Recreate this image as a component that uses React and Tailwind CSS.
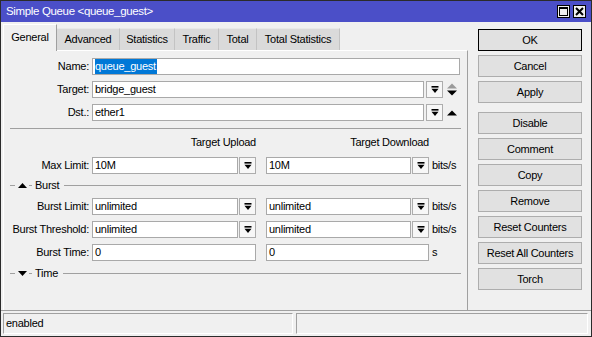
import React from "react";

const DdIcon = () => (
  <svg width="8" height="8" viewBox="0 0 8 8">
    <rect x="0.5" y="0" width="7" height="1.6" fill="#000" />
    <polygon points="0.5,2.8 7.5,2.8 4,7" fill="#000" />
  </svg>
);

const DdBtn = () => (
  <div className="w-[17px] h-[17px] shrink-0 border border-[#adadad] bg-[#f7f7f7] flex items-center justify-center">
    <DdIcon />
  </div>
);

const Input = ({ w, children }) => (
  <div
    className={`${w} h-[17px] shrink-0 bg-white border border-[#a9a9a9] flex items-center pl-[2px] leading-none overflow-hidden whitespace-nowrap`}
  >
    {children}
  </div>
);

const Label = ({ children }) => (
  <div className="w-[85px] shrink-0 text-right pr-0 mr-[3px] whitespace-nowrap">{children}</div>
);

const Row = ({ children, className = "" }) => (
  <div className={`flex items-center h-[17px] ${className}`}>{children}</div>
);

const TriUp = ({ color = "#000" }) => (
  <svg width="10" height="6" viewBox="0 0 10 6">
    <polygon points="0,5.5 10,5.5 5,0.5" fill={color} />
  </svg>
);
const TriDown = ({ color = "#000" }) => (
  <svg width="10" height="6" viewBox="0 0 10 6">
    <polygon points="0,0.5 10,0.5 5,5.5" fill={color} />
  </svg>
);

const SectionSep = ({ up, label }) => (
  <div className="flex items-center h-[22px] ml-[6px] mr-[6px]">
    <div className="w-[5px] border-t border-[#a0a0a0]" />
    <div className="ml-[3px] w-[9px] flex items-center justify-center">
      {up ? (
        <svg width="9" height="5" viewBox="0 0 9 5"><polygon points="0,5 9,5 4.5,0" fill="#000" /></svg>
      ) : (
        <svg width="9" height="5" viewBox="0 0 9 5"><polygon points="0,0 9,0 4.5,5" fill="#000" /></svg>
      )}
    </div>
    <div className="ml-[2px] w-[3px] border-t border-[#a0a0a0]" />
    <div className="ml-[3px] leading-none">{label}</div>
    <div className="ml-[5px] flex-1 border-t border-[#a0a0a0]" />
  </div>
);

const Btn = ({ children, focused }) => (
  <div
    className={`w-[104px] h-[22px] flex items-center justify-center bg-[#e1e1e1] border ${
      focused ? "border-black" : "border-[#adadad]"
    }`}
  >
    {children}
  </div>
);

export default function App() {
  const tabs = ["Advanced", "Statistics", "Traffic", "Total", "Total Statistics"];
  const tabW = ["w-[63px]", "w-[55px]", "w-[44px]", "w-[38px]", "w-[83px]"];
  return (
    <div className="w-[592px] h-[337px] bg-[#f0f0f0] border border-[#2b2b2b] flex flex-col font-['Liberation_Sans',Arial,sans-serif] text-[11px] tracking-[-0.25px] text-black overflow-hidden">
      {/* Title bar */}
      <div className="h-[21px] shrink-0 bg-[#4b4fc8] flex items-center justify-between pl-[5px] pr-[5px]">
        <div className="text-white text-[11.5px] tracking-[-0.35px] leading-none">Simple Queue &lt;queue_guest&gt;</div>
        <div className="flex items-center gap-[3px]">
          <div className="w-[13px] h-[13px] bg-[#f0f0f0] border border-black flex items-center justify-center">
            <svg width="9" height="9" viewBox="0 0 9 9">
              <rect x="0.5" y="0.5" width="8" height="8" fill="none" stroke="#000" strokeWidth="1" />
              <rect x="0" y="0" width="9" height="2" fill="#000" />
            </svg>
          </div>
          <div className="w-[13px] h-[13px] bg-[#f0f0f0] border border-black flex items-center justify-center">
            <svg width="9" height="9" viewBox="0 0 9 9">
              <path d="M1 1 L8 8 M8 1 L1 8" stroke="#000" strokeWidth="2" />
            </svg>
          </div>
        </div>
      </div>

      {/* Main */}
      <div className="flex h-[288px] shrink-0">
        {/* Left column */}
        <div className="ml-[2px] w-[465px] flex flex-col">
          {/* Tabs */}
          <div className="h-[28px] flex items-end relative">
            <div className="w-[54px] h-[27px] bg-[#f0f0f0] border-l border-t border-r border-white border-r-[#a0a0a0] flex items-center justify-center pb-[2px] relative z-10 -mb-[1px]">
              General
            </div>
            {tabs.map((t, i) => (
              <div
                key={t}
                className={`${tabW[i]} h-[22px] bg-[#dadada] border-t border-r border-[#c3c3c3] border-t-[#e8e8e8] flex items-center justify-center`}
              >
                {t}
              </div>
            ))}
          </div>
          {/* Panel */}
          <div className="flex-1 border-l border-t border-white border-r border-r-[#a0a0a0] flex flex-col pt-[7px]">
            <Row>
              <Label>Name:</Label>
              <Input w="w-[368px]">
                <span className="bg-[#0078d7] text-white h-[15px] flex items-center pr-[1px]">queue_guest</span>
              </Input>
            </Row>
            <Row className="mt-[6px]">
              <Label>Target:</Label>
              <Input w="w-[332px]">bridge_guest</Input>
              <div className="ml-[2px]"><DdBtn /></div>
              <div className="ml-[4px] flex flex-col gap-[1px]">
                <TriUp color="#9a9a9a" />
                <TriDown />
              </div>
            </Row>
            <Row className="mt-[6px]">
              <Label>Dst.:</Label>
              <Input w="w-[332px]">ether1</Input>
              <div className="ml-[2px]"><DdBtn /></div>
              <div className="ml-[4px] flex flex-col">
                <TriUp />
              </div>
            </Row>
            <div className="mt-[7px] ml-[6px] mr-[6px] border-t border-[#a0a0a0]" />
            <div className="mt-[5px] h-[17px] flex items-center">
              <div className="w-[88px] shrink-0" />
              <div className="w-[164px] text-right">Target Upload</div>
              <div className="w-[10px]" />
              <div className="w-[163px] text-right">Target Download</div>
            </div>
            <Row className="mt-[6px]">
              <Label>Max Limit:</Label>
              <Input w="w-[146px]">10M</Input>
              <div className="ml-[1px]"><DdBtn /></div>
              <div className="ml-[10px]"><Input w="w-[145px]">10M</Input></div>
              <div className="ml-[1px]"><DdBtn /></div>
              <div className="ml-[3px]">bits/s</div>
            </Row>
            <SectionSep up label="Burst" />
            <Row className="mt-[2px]">
              <Label>Burst Limit:</Label>
              <Input w="w-[146px]">unlimited</Input>
              <div className="ml-[1px]"><DdBtn /></div>
              <div className="ml-[10px]"><Input w="w-[145px]">unlimited</Input></div>
              <div className="ml-[1px]"><DdBtn /></div>
              <div className="ml-[3px]">bits/s</div>
            </Row>
            <Row className="mt-[6px]">
              <Label>Burst Threshold:</Label>
              <Input w="w-[146px]">unlimited</Input>
              <div className="ml-[1px]"><DdBtn /></div>
              <div className="ml-[10px]"><Input w="w-[145px]">unlimited</Input></div>
              <div className="ml-[1px]"><DdBtn /></div>
              <div className="ml-[3px]">bits/s</div>
            </Row>
            <Row className="mt-[6px]">
              <Label>Burst Time:</Label>
              <Input w="w-[164px]">0</Input>
              <div className="ml-[10px]"><Input w="w-[163px]">0</Input></div>
              <div className="ml-[3px]">s</div>
            </Row>
            <div className="mt-[1px]">
              <SectionSep label="Time" />
            </div>
          </div>
        </div>
        {/* Buttons */}
        <div className="ml-[10px] pt-[7px] flex flex-col">
          <Btn focused>OK</Btn>
          <div className="mt-[4px]"><Btn>Cancel</Btn></div>
          <div className="mt-[4px]"><Btn>Apply</Btn></div>
          <div className="mt-[9px]"><Btn>Disable</Btn></div>
          <div className="mt-[4px]"><Btn>Comment</Btn></div>
          <div className="mt-[4px]"><Btn>Copy</Btn></div>
          <div className="mt-[4px]"><Btn>Remove</Btn></div>
          <div className="mt-[4px]"><Btn>Reset Counters</Btn></div>
          <div className="mt-[4px]"><Btn>Reset All Counters</Btn></div>
          <div className="mt-[4px]"><Btn>Torch</Btn></div>
        </div>
      </div>

      {/* Status bar */}
      <div className="flex-1 border-t border-[#a0a0a0] flex items-start pt-[2px] pl-[2px] gap-[3px]">
        <div className="w-[290px] h-[21px] border border-[#a0a0a0] border-b-white border-r-white flex items-center pl-[2px]">
          enabled
        </div>
        <div className="w-[292px] h-[21px] border border-[#a0a0a0] border-b-white border-r-white" />
      </div>
    </div>
  );
}
